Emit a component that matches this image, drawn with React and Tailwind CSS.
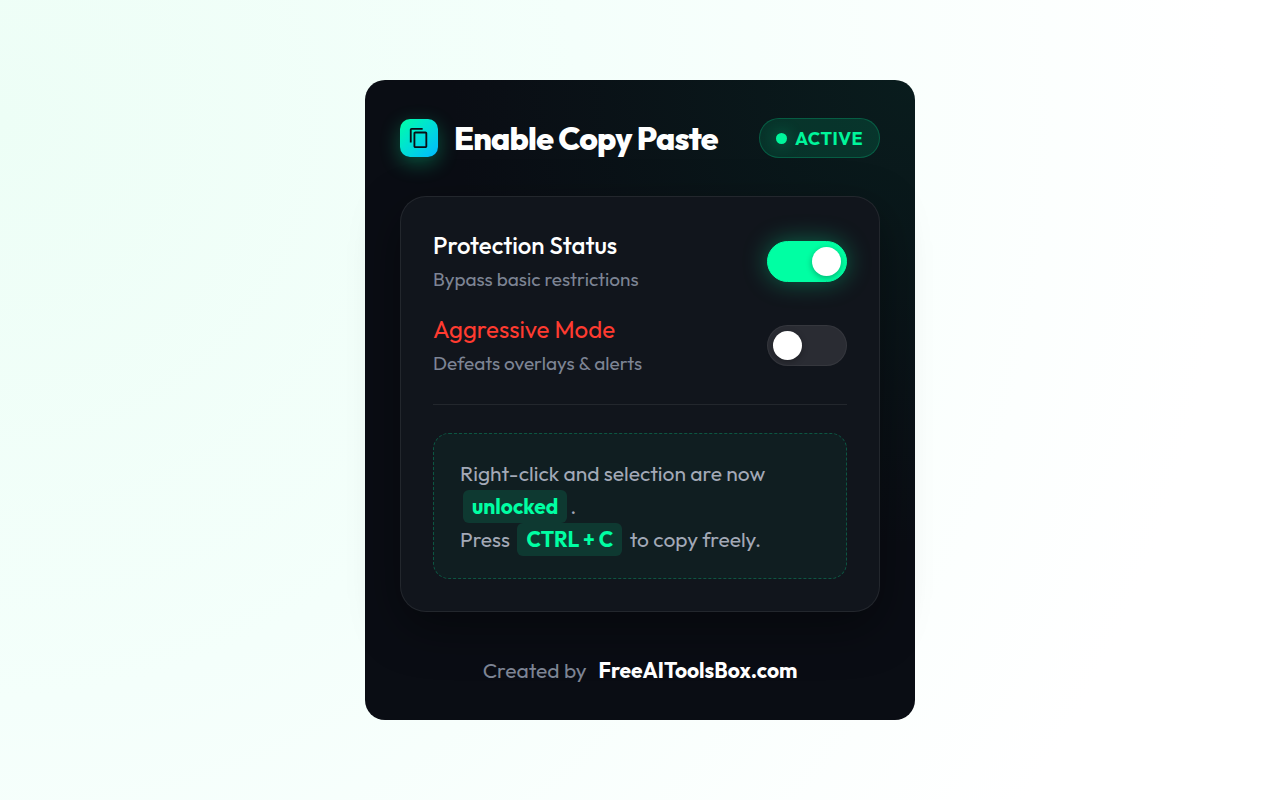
import { useState } from "react";
import { MdContentCopy } from "react-icons/md";

function SettingRow({ id, title, description, titleClass, checked, onChange }) {
  return (
    <div className="flex items-center justify-between gap-4">
      <label htmlFor={id} className="flex cursor-pointer flex-col gap-[7px]">
        <span className={`text-[24px] leading-[30px] ${titleClass}`}>{title}</span>
        <span className="text-[19px] leading-[25px] text-[#7d8494]">{description}</span>
      </label>
      <input
        id={id}
        type="checkbox"
        role="switch"
        checked={checked}
        onChange={(e) => onChange(e.target.checked)}
        className="flex h-[41px] w-20 shrink-0 cursor-pointer appearance-none items-center rounded-full border border-white/5 bg-[#2a2c33] px-[5px] transition-colors before:size-[29px] before:rounded-full before:bg-white before:shadow-[0_2px_6px_rgba(0,0,0,0.3)] before:content-[''] checked:justify-end checked:border-[#00ffa3] checked:bg-[#00ffa3] checked:shadow-[0_0_24px_rgba(0,255,163,0.35)]"
      />
    </div>
  );
}

function Key({ children }) {
  return (
    <strong className="mx-[3px] inline-block rounded-md bg-[#00ffa3]/12 px-[9px] align-top font-bold text-[#00ffa3]">
      {children}
    </strong>
  );
}

export default function App() {
  const [protection, setProtection] = useState(true);
  const [aggressive, setAggressive] = useState(false);

  return (
    <div className="flex min-h-screen items-center justify-center bg-[radial-gradient(circle_at_0%_15%,#edfef6_0%,#f4fffb_40%,#ffffff_85%)] font-['Outfit','Lato',sans-serif]">
      <main className="w-full max-w-[550px] rounded-[20px] bg-[#0a0d14] bg-[radial-gradient(circle_at_100%_0%,#091c1d_0%,#0a0d1400_55%)] px-[35px] pt-[38px] pb-9">
        <header className="flex items-center justify-between gap-4">
          <div className="flex items-center gap-4">
            <span className="flex size-[38px] shrink-0 items-center justify-center rounded-[10px] bg-linear-135 from-[#00ffa3] to-[#00b8ff] text-[#0a0d14] shadow-[0_6px_20px_rgba(0,255,163,0.3)]">
              <MdContentCopy size={22} aria-hidden="true" />
            </span>
            <h1 className="text-[32px] leading-10 font-extrabold tracking-tight whitespace-nowrap text-white">
              Enable Copy Paste
            </h1>
          </div>
          <div className="flex h-10 items-center gap-2 rounded-full border border-[#00ffa3]/20 bg-[#00ffa3]/12 px-4 text-[18px] font-bold tracking-wide text-[#00f59b]">
            <span className="size-[11px] rounded-full bg-[#00f59b] shadow-[0_0_16px_rgba(0,255,163,0.4)]" />
            ACTIVE
          </div>
        </header>

        <section className="mt-[38px] rounded-[26px] border border-white/8 bg-[#11151c] px-8 pt-[33px] pb-8 shadow-[0_16px_48px_rgba(0,0,0,0.4)]">
          <div className="flex flex-col gap-[22px]">
            <SettingRow
              id="protection"
              title="Protection Status"
              description="Bypass basic restrictions"
              titleClass="font-medium text-white"
              checked={protection}
              onChange={setProtection}
            />
            <SettingRow
              id="aggressive"
              title="Aggressive Mode"
              description="Defeats overlays & alerts"
              titleClass="text-[#ff3b30]"
              checked={aggressive}
              onChange={setAggressive}
            />
          </div>
          <hr className="my-7 border-t border-white/8" />
          <p className="rounded-2xl border border-dashed border-[#00ffa3]/25 bg-[#00ffa3]/4 px-[26px] pt-[23px] pb-[22px] text-[21px] leading-[33px] text-[#a3a9b7]">
            Right-click and selection are now
            <br />
            <Key>unlocked</Key>.
            <br />
            Press <Key>CTRL + C</Key> to copy freely.
          </p>
        </section>

        <footer className="mt-11 flex justify-center gap-3 text-[21px] leading-7 text-[#7d8494]">
          Created by
          <a href="#" className="font-bold text-white">
            FreeAIToolsBox.com
          </a>
        </footer>
      </main>
    </div>
  );
}
